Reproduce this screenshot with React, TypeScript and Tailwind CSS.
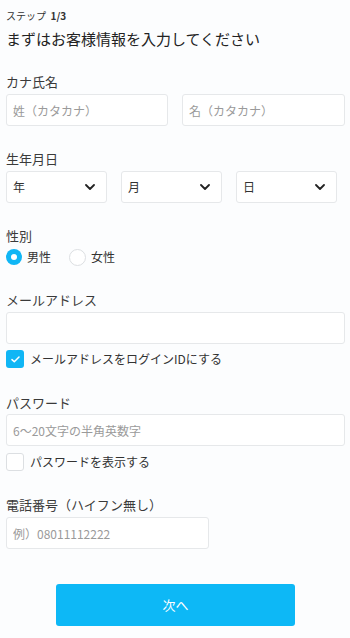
import React, { useState } from 'react';

const fontStack = "font-['Noto_Sans_CJK_JP','Noto_Sans',sans-serif]";

const Label: React.FC<{ children: React.ReactNode; className?: string }> = ({ children, className = '' }) => (
  <div className={`text-[13px] leading-[20px] text-[#3a3a3a] ${className}`}>{children}</div>
);

const TextInput: React.FC<{ placeholder?: string; className?: string; type?: string }> = ({
  placeholder,
  className = '',
  type = 'text',
}) => (
  <input
    type={type}
    placeholder={placeholder}
    className={`h-[32px] rounded-[3px] border border-[#e6e8ea] bg-white px-[6px] text-[12px] text-[#333] placeholder:text-[#9a9a9a] outline-none ${className}`}
  />
);

const Chevron = () => (
  <svg width="10" height="6" viewBox="0 0 10 6" fill="none">
    <path d="M1 1l4 4 4-4" stroke="#222" strokeWidth="1.8" strokeLinecap="round" strokeLinejoin="round" />
  </svg>
);

const SelectBox: React.FC<{ label: string }> = ({ label }) => (
  <div className="flex h-[32px] w-[101px] items-center justify-between rounded-[3px] border border-[#e6e8ea] bg-white pl-[6px] pr-[11px]">
    <span className="text-[12px] text-[#333]">{label}</span>
    <Chevron />
  </div>
);

const Radio: React.FC<{ checked: boolean; label: string; onClick: () => void }> = ({ checked, label, onClick }) => (
  <button type="button" onClick={onClick} className="flex items-center gap-[5px]">
    {checked ? (
      <span className="flex h-[16px] w-[16px] items-center justify-center rounded-full bg-[#10b6f5]">
        <span className="h-[6px] w-[6px] rounded-full bg-white" />
      </span>
    ) : (
      <span className="h-[17px] w-[17px] rounded-full border border-[#dcdfe2] bg-white" />
    )}
    <span className="text-[12px] text-[#333]">{label}</span>
  </button>
);

const Checkbox: React.FC<{ checked: boolean; label: string; onClick: () => void }> = ({ checked, label, onClick }) => (
  <button type="button" onClick={onClick} className="flex items-center gap-[6px]">
    {checked ? (
      <span className="flex h-[18px] w-[18px] items-center justify-center rounded-[3px] bg-[#10b6f5]">
        <svg width="9" height="7" viewBox="0 0 9 7" fill="none">
          <path d="M1 3.6l2.3 2.2L8 1" stroke="#fff" strokeWidth="1.5" strokeLinecap="round" strokeLinejoin="round" />
        </svg>
      </span>
    ) : (
      <span className="h-[18px] w-[18px] rounded-[3px] border border-[#dcdfe2] bg-white" />
    )}
    <span className="text-[12px] text-[#333]">{label}</span>
  </button>
);

export default function App() {
  const [gender, setGender] = useState<'m' | 'f'>('m');
  const [useLoginId, setUseLoginId] = useState(true);
  const [showPw, setShowPw] = useState(false);

  return (
    <div className={`h-[638px] w-[350px] bg-[#fcfdfe] pl-[6px] pr-[5px] pt-[9px] ${fontStack}`}>
      <div className="text-[10px] leading-[14px] text-[#333]">
        ステップ&nbsp;&nbsp;<span className="font-bold">1/3</span>
      </div>
      <h1 className="mt-[5px] text-[15px] leading-[22px] text-[#222]">まずはお客様情報を入力してください</h1>

      <Label className="mt-[22px] mb-[2px]">カナ氏名</Label>
      <div className="flex gap-[14px]">
        <TextInput placeholder="姓（カタカナ）" className="w-[162px]" />
        <TextInput placeholder="名（カタカナ）" className="w-[163px]" />
      </div>

      <Label className="mt-[23px] mb-[2px]">生年月日</Label>
      <div className="flex gap-[14px]">
        <SelectBox label="年" />
        <SelectBox label="月" />
        <SelectBox label="日" />
      </div>

      <Label className="mt-[23px] mb-[2px]">性別</Label>
      <div className="flex h-[18px] items-center gap-[18px]">
        <Radio checked={gender === 'm'} label="男性" onClick={() => setGender('m')} />
        <Radio checked={gender === 'f'} label="女性" onClick={() => setGender('f')} />
      </div>

      <Label className="mt-[24px] mb-[2px]">メールアドレス</Label>
      <TextInput className="w-full" type="email" />
      <div className="mt-[6px] flex h-[18px] items-center">
        <Checkbox checked={useLoginId} label="メールアドレスをログインIDにする" onClick={() => setUseLoginId(!useLoginId)} />
      </div>

      <Label className="mt-[25px] mb-[1px]">パスワード</Label>
      <TextInput className="w-full" placeholder="6～20文字の半角英数字" type={showPw ? 'text' : 'password'} />
      <div className="mt-[7px] flex h-[18px] items-center">
        <Checkbox checked={showPw} label="パスワードを表示する" onClick={() => setShowPw(!showPw)} />
      </div>

      <Label className="mt-[24px] mb-[2px]">電話番号（ハイフン無し）</Label>
      <TextInput className="w-[203px]" placeholder="例）08011112222" />

      <div className="mt-[35px] flex justify-center">
        <button
          type="button"
          className="h-[42px] w-[239px] rounded-[3px] bg-[#0db8f6] text-[13px] text-white"
        >
          次へ
        </button>
      </div>
    </div>
  );
}
